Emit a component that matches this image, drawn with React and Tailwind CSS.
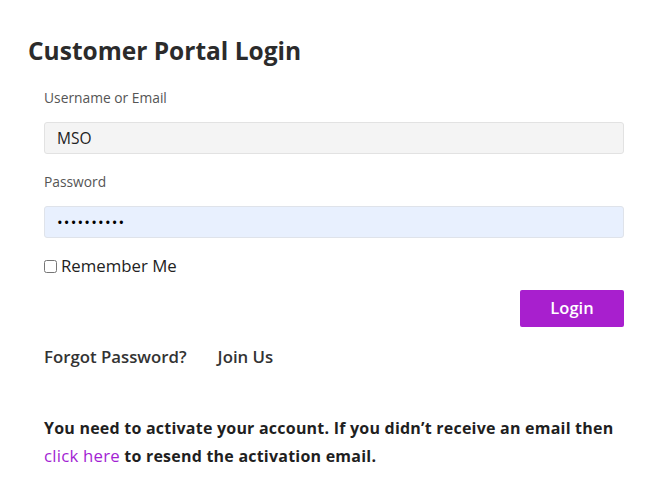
export default function App() {
  return (
    <div className="min-h-screen bg-white px-7 pt-[36px] font-['Open_Sans',sans-serif] text-[#2b2b2b]">
      <h1 className="text-[24.5px] font-bold leading-[30px] text-[#2b2b2b]">Customer Portal Login</h1>

      <form className="pl-4 pr-[13px]" onSubmit={(e) => e.preventDefault()}>
        <label className="mt-[22px] block text-[13.8px] leading-[20px] text-[#555]">Username or Email</label>
        <input
          type="text"
          defaultValue="MSO"
          className="mt-[14px] block h-8 w-full rounded-[3px] border border-[#e2e2e2] bg-[#f4f4f4] px-3 text-[15.5px] text-[#222] outline-none"
        />

        <label className="mt-[18px] block text-[13.8px] leading-[20px] text-[#555]">Password</label>
        <input
          type="password"
          defaultValue="mso1234567"
          className="mt-[14px] block h-8 w-full rounded-[3px] border border-[#dfe3ea] bg-[#e8f0fe] px-3 text-[15px] tracking-[1.2px] text-black outline-none"
        />

        <label className="mt-[18px] flex h-5 items-center gap-[4px] text-[16.8px] text-[#222]">
          <input type="checkbox" className="m-0 h-[13px] w-[13px]" />
          Remember Me
        </label>

        <div className="mt-[14px] flex justify-end">
          <button
            type="submit"
            className="h-[37px] w-[104px] rounded-[2px] bg-[#a81fce] text-[16.5px] font-semibold text-white"
          >
            Login
          </button>
        </div>

        <div className="mt-[19px] flex gap-[31px] text-[16.8px] font-semibold leading-[22px] text-[#333]">
          <a href="#">Forgot Password?</a>
          <a href="#">Join Us</a>
        </div>

        <p className="mt-[46px] text-[16px] font-bold leading-[28px] tracking-[0.22px] text-[#1f1f1f]">
          You need to activate your account. If you didn’t receive an email then{' '}
          <a href="#" className="text-[16.8px] font-normal text-[#a31fd3]">click here</a> to resend the activation email.
        </p>
      </form>
    </div>
  )
}
